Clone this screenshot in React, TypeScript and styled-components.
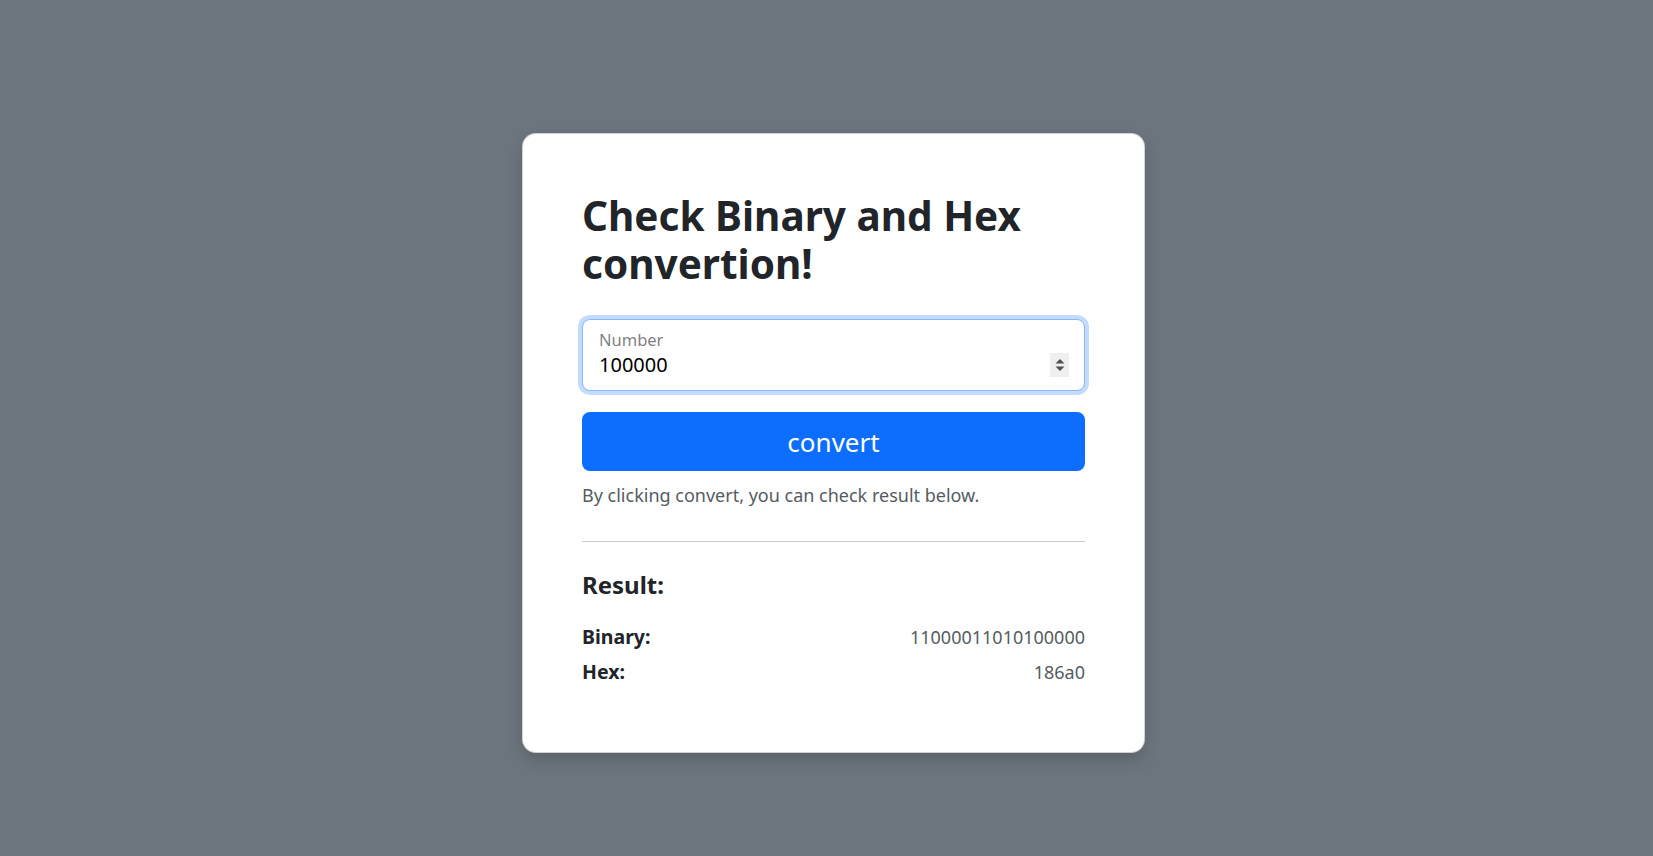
import React, { useState } from 'react';
import styled, { createGlobalStyle } from 'styled-components';

const GlobalStyle = createGlobalStyle`
  html, body {
    margin: 0;
    padding: 0;
  }
  body {
    background: #6c757d;
    font-family: "Segoe UI", "Noto Sans", "Open Sans", sans-serif;
    color: #212529;
  }
  * {
    box-sizing: border-box;
  }
`;

const Page = styled.div`
  min-height: 100vh;
  display: flex;
  justify-content: center;
  align-items: flex-start;
  padding: 133px 0 0 14px;
`;

const Card = styled.div`
  width: 623px;
  background: #fff;
  border: 1px solid rgba(0, 0, 0, 0.175);
  border-radius: 14px;
  box-shadow: 0 8px 16px rgba(0, 0, 0, 0.15);
  padding: 58px 59px 65px;
`;

const Title = styled.h1`
  margin: 0 0 31px;
  font-size: 40.5px;
  line-height: 48px;
  font-weight: 700;
  color: #212529;
`;

const Field = styled.label`
  display: flex;
  flex-direction: column;
  height: 72px;
  padding: 10px 16px 0;
  border: 1px solid #86b7fe;
  border-radius: 8px;
  box-shadow: 0 0 0 4px rgba(13, 110, 253, 0.25);
  background: #fff;
`;

const FieldLabel = styled.span`
  font-size: 16.5px;
  line-height: 20px;
  color: rgba(33, 37, 41, 0.6);
  margin-bottom: 3px;
`;

const FieldRow = styled.div`
  display: flex;
  align-items: center;
  gap: 8px;
`;

const NumberInput = styled.input`
  flex: 1;
  min-width: 0;
  border: 0;
  outline: none;
  padding: 0;
  font-family: inherit;
  font-size: 20px;
  line-height: 24px;
  height: 24px;
  color: #000;
  background: transparent;
  caret-color: #000;
  -moz-appearance: textfield;

  &::-webkit-outer-spin-button,
  &::-webkit-inner-spin-button {
    -webkit-appearance: none;
    margin: 0;
  }
`;

const Spinner = styled.span`
  display: flex;
  align-items: center;
  justify-content: center;
  width: 19px;
  height: 24px;
  background: #efefef;
  margin-right: -1px;
`;

const ConvertButton = styled.button`
  display: block;
  width: 100%;
  height: 59px;
  margin-top: 21px;
  border: 0;
  border-radius: 8px;
  background: #0d6efd;
  color: #fff;
  font-family: inherit;
  font-size: 26px;
  line-height: 1;
  cursor: pointer;
`;

const Helper = styled.p`
  margin: 11px 0 0;
  font-size: 18px;
  line-height: 27px;
  color: #555b61;
`;

const Divider = styled.hr`
  margin: 32px 0 0;
  border: 0;
  border-top: 1px solid #c8c9ca;
`;

const ResultTitle = styled.h4`
  margin: 29px 0 0;
  font-size: 24px;
  line-height: 28.8px;
  font-weight: 700;
`;

const ResultList = styled.div`
  display: flex;
  flex-direction: column;
  gap: 6px;
  margin-top: 23px;
`;

const ResultRow = styled.div`
  display: flex;
  justify-content: space-between;
  align-items: flex-start;
`;

const ResultLabel = styled.span`
  font-size: 19.5px;
  line-height: 27px;
  font-weight: 700;
  color: #212529;
`;

const ResultValue = styled.span`
  font-size: 18px;
  line-height: 29px;
  color: #555b61;
`;

export default function App() {
  const [value, setValue] = useState('100000');
  const [result, setResult] = useState({ binary: '11000011010100000', hex: '186a0' });

  const convert = () => {
    const n = parseInt(value, 10);
    if (isNaN(n)) return;
    setResult({ binary: n.toString(2), hex: n.toString(16) });
  };

  return (
    <>
      <GlobalStyle />
      <Page>
        <Card>
          <Title>Check Binary and Hex convertion!</Title>
          <Field>
            <FieldLabel>Number</FieldLabel>
            <FieldRow>
              <NumberInput
                type="number"
                value={value}
                autoFocus
                onChange={(e) => setValue(e.target.value)}
              />
              <Spinner>
                <svg width="10" height="14" viewBox="0 0 10 14">
                  <path d="M5 1 L9.5 5.5 L0.5 5.5 Z" fill="#505050" />
                  <path d="M5 13 L9.5 8.5 L0.5 8.5 Z" fill="#505050" />
                </svg>
              </Spinner>
            </FieldRow>
          </Field>
          <ConvertButton onClick={convert}>convert</ConvertButton>
          <Helper>By clicking convert, you can check result below.</Helper>
          <Divider />
          <ResultTitle>Result:</ResultTitle>
          <ResultList>
            <ResultRow>
              <ResultLabel>Binary:</ResultLabel>
              <ResultValue>{result.binary}</ResultValue>
            </ResultRow>
            <ResultRow>
              <ResultLabel>Hex:</ResultLabel>
              <ResultValue>{result.hex}</ResultValue>
            </ResultRow>
          </ResultList>
        </Card>
      </Page>
    </>
  );
}
